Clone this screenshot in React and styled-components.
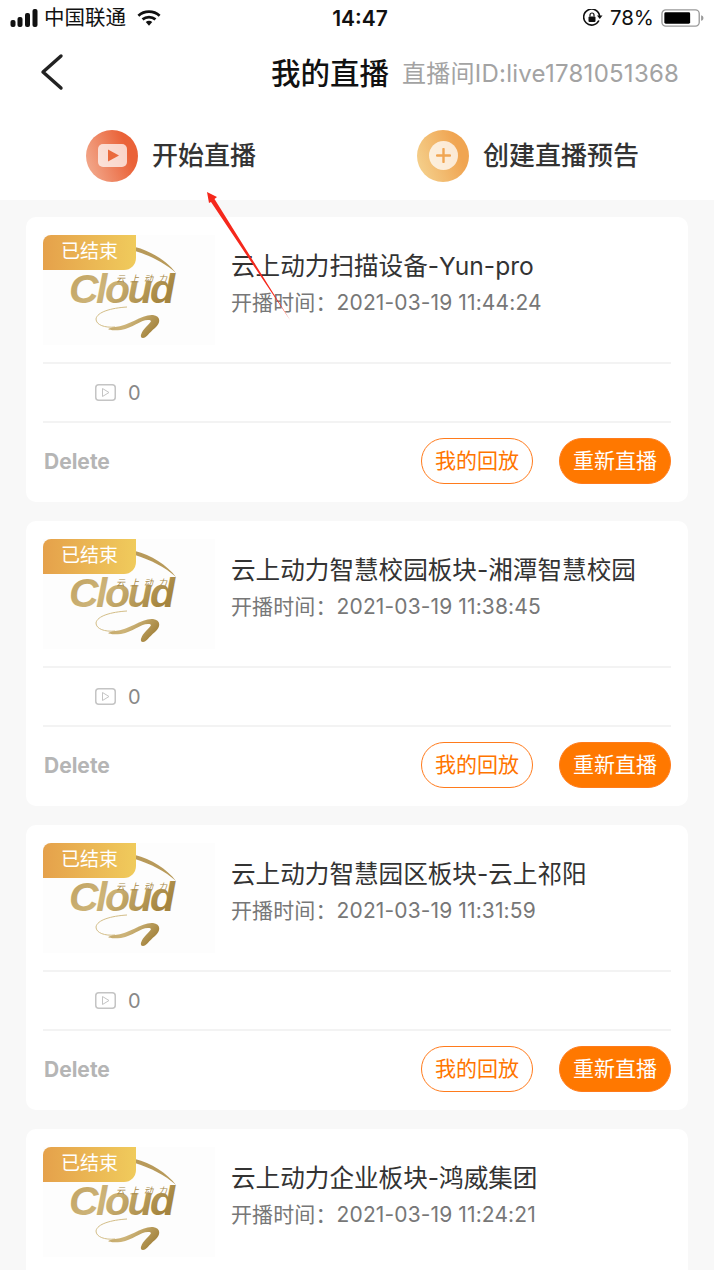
import React from 'react'
import styled, { createGlobalStyle } from 'styled-components'

const GlobalStyle = createGlobalStyle`
	html, body {
		margin: 0;
		padding: 0;
		background: #f8f8f8;
	}
	body {
		font-family: Inter, 'Noto Sans CJK SC', sans-serif;
		overflow: hidden;
	}
`
const Page = styled.div`
	position: relative;
	width: 714px;
	height: 1270px;
	overflow: hidden;
	background: #f8f8f8;
`
const Header = styled.header`
	background: #fff;
	height: 200px;
`
const StatusBar = styled.div`
	display: flex;
	align-items: center;
	justify-content: space-between;
	height: 36px;
	padding: 0 10px;
	color: #111;
`
const StatusSide = styled.div`
	display: flex;
	align-items: center;
	gap: ${(p) => p.$gap}px;
	width: ${(p) => p.$width}px;
	justify-content: ${(p) => (p.$right ? 'flex-end' : 'flex-start')};
`
const StatusText = styled.span`
	font-size: 20.5px;
	line-height: 24px;
`
const Clock = styled.span`
	font-size: 21px;
	font-weight: 600;
`
const WifiSlot = styled.span`
	display: flex;
	margin-left: 5px;
`
const NavBar = styled.div`
	display: flex;
	align-items: center;
	height: 72px;
	padding-left: 40px;
`
const NavTitle = styled.h1`
	margin: 2px 0 0 207px;
	font-size: 29.5px;
	line-height: 36px;
	font-weight: 500;
	color: #111;
	white-space: nowrap;
`
const NavId = styled.span`
	margin: 0 0 2px 13px;
	font-size: 24px;
	letter-spacing: 0.25px;
	color: #a3a3a3;
	white-space: nowrap;
`
const ActionRow = styled.div`
	display: flex;
	box-sizing: border-box;
	height: 92px;
	align-items: center;
	padding: 3px 0 0 86px;
`
const Action = styled.div`
	display: flex;
	align-items: center;
	gap: 14px;
	margin-right: ${(p) => p.$gap || 0}px;
`
const ActionLabel = styled.span`
	padding-bottom: 5px;
	font-size: 26px;
	color: #333;
	font-weight: 500;
`
const ActionCircle = styled.div`
	display: flex;
	align-items: center;
	justify-content: center;
	width: 52px;
	height: 52px;
	border-radius: 50%;
	background: ${(p) => p.$bg};
`
const PlusDisc = styled.div`
	display: flex;
	align-items: center;
	justify-content: center;
	width: 29px;
	height: 29px;
	border-radius: 50%;
	background: rgba(255, 255, 255, 0.75);
`
const List = styled.main`
	display: flex;
	flex-direction: column;
	gap: 19px;
	padding: 17px 26px 0;
`
const Card = styled.article`
	flex: none;
	height: 285px;
	box-sizing: border-box;
	padding: 18px 17px 0;
	background: #fff;
	border-radius: 10px;
`
const TopRow = styled.div`
	display: flex;
	height: 110px;
	border-bottom: 2px solid #f3f3f3;
	padding-bottom: 17px;
`
const Thumb = styled.div`
	position: relative;
	width: 172px;
	height: 110px;
	background: #fdfdfd;
	flex: none;
`
const Badge = styled.div`
	position: absolute;
	left: 0;
	top: 0;
	z-index: 1;
	width: 93px;
	height: 35px;
	box-sizing: border-box;
	padding-left: 18px;
	font-size: 19px;
	line-height: 34px;
	color: #fff;
	background: linear-gradient(90deg, #e5a14b, #f0cb5c);
	border-radius: 8px 0 12px 0;
`
const Info = styled.div`
	margin-left: 16px;
	padding-top: 15px;
`
const Title = styled.h2`
	margin: 0;
	font-size: 24.6px;
	line-height: 32px;
	font-weight: 400;
	color: #333;
	white-space: nowrap;
`
const SubTitle = styled.p`
	margin: 8px 0 0;
	font-size: 21px;
	line-height: 26px;
	letter-spacing: 0.12px;
	color: #777;
	white-space: nowrap;
`
const StatRow = styled.div`
	display: flex;
	align-items: center;
	gap: 12px;
	height: 57px;
	padding-left: 52px;
	border-bottom: 2px solid #f3f3f3;
	font-size: 20px;
	color: #888;
`
const FootRow = styled.div`
	display: flex;
	align-items: center;
	height: 76px;
`
const DeleteLink = styled.span`
	margin: 0 auto 0 1px;
	font-size: 21px;
	font-weight: 700;
	color: #b5b5b5;
`
const Pill = styled.button`
	width: 112px;
	height: 46px;
	padding: 0 0 5px;
	margin-left: ${(p) => (p.$filled ? 26 : 0)}px;
	border: 1px solid #ff7b1c;
	border-radius: 23px;
	font-family: inherit;
	font-size: 21px;
	color: ${(p) => (p.$filled ? '#fff' : '#ff7500')};
	background: ${(p) => (p.$filled ? '#ff7800' : '#fff')};
`
const Annotation = styled.svg`
	position: absolute;
	left: 200px;
	top: 185px;
	z-index: 2;
`

const Signal = () => (
	<svg width="28" height="18" viewBox="0 0 28 18">
		<rect x="0.5" y="11" width="5" height="7" rx="2" fill="#111" />
		<rect x="7.5" y="8" width="5" height="10" rx="2" fill="#111" />
		<rect x="15" y="4" width="5" height="14" rx="2" fill="#111" />
		<rect x="22.5" y="0" width="5" height="18" rx="2" fill="#111" />
	</svg>
)

const Wifi = () => (
	<svg width="24" height="18" viewBox="0 0 26 18" fill="none">
		<path d="M1.5 6.5C8 .7 18 .7 24.5 6.5" stroke="#111" strokeWidth="3" />
		<path d="M6 10.5c4-3.4 10-3.4 14 0" stroke="#111" strokeWidth="3" />
		<path d="M9.5 13.2c2.1-1.6 4.9-1.6 7 0L13 17.5z" fill="#111" />
	</svg>
)

const RotationLock = () => (
	<svg width="20" height="18" viewBox="0 0 20 18" fill="none">
		<path d="M15.9 11.5A8 8 0 1 1 16.6 7" stroke="#111" strokeWidth="1.6" />
		<path d="M14 6.5h5.5L16.8 10z" fill="#111" />
		<rect x="5.5" y="7.5" width="7" height="5.5" rx="1" fill="#111" />
		<path d="M7 7.5V6a2 2 0 0 1 4 0v1.5" stroke="#111" strokeWidth="1.2" />
	</svg>
)

const Battery = () => (
	<svg width="43" height="20" viewBox="0 0 45 20" fill="none">
		<rect x="1" y="1.5" width="39" height="17" rx="4" stroke="#999" strokeWidth="1.4" />
		<rect x="3.5" y="4" width="27" height="12" rx="1.5" fill="#000" />
		<path d="M42 7c1.6.4 2.4 1.6 2.4 3s-.8 2.6-2.4 3z" fill="#999" />
	</svg>
)

const BackIcon = () => (
	<svg width="24" height="38" viewBox="0 0 24 38" fill="none">
		<path d="M21 3 3 19l18 16" stroke="#222" strokeWidth="3.4" strokeLinecap="round" strokeLinejoin="round" />
	</svg>
)

const PlayGlyph = () => (
	<svg width="29" height="23" viewBox="0 0 29 23">
		<rect width="29" height="23" rx="5" fill="#fff" fillOpacity="0.72" />
		<path d="M10 5.5 21 11.5 10 17.5z" fill="#ea6a3c" />
	</svg>
)

const PlusGlyph = () => (
	<svg width="15" height="15" viewBox="0 0 15 15">
		<path d="M7.5 1v13M1 7.5h13" stroke="#f0a552" strokeWidth="2.4" strokeLinecap="round" />
	</svg>
)

const ViewsIcon = () => (
	<svg width="21" height="17" viewBox="0 0 21 17" fill="none">
		<rect x="0.75" y="0.75" width="19.5" height="15.5" rx="3" stroke="#c4c4c4" strokeWidth="1.5" />
		<path d="M7.5 4.5 14 8.5l-6.5 4z" stroke="#c4c4c4" />
	</svg>
)

const CloudLogo = ({ id }) => (
	<svg width="172" height="110" viewBox="0 0 172 110" fill="none">
		<defs>
			<linearGradient id={id} x1="0" y1="0" x2="1" y2="0.4">
				<stop offset="0" stopColor="#bfa05e" />
				<stop offset="0.45" stopColor="#cdb479" />
				<stop offset="1" stopColor="#a5853f" />
			</linearGradient>
		</defs>
		<path d="M92 12C108 16 124 26 133 38 122 28 108 21 92 16z" fill="#b89a5a" />
		<path d="M84 72C68 73 54 77 53 84 53 90 62 93 72 92" stroke="#d3bd87" strokeWidth="1" />
		<path
			d="M72 92C86 91 99 79 110 80 118 81 118 88 112 93 106 98 103 103 100 103 96 103 98 97 103 92 108 87 110 85 105 85 97 85 90 93 78 95 66 96 60 94 72 92z"
			fill={`url(#${id})`}
		/>
		<text x="26" y="68" fontFamily="'Liberation Sans', sans-serif" fontStyle="italic" fontWeight="700" fontSize="41" letterSpacing="-2.5" fill={`url(#${id})`}>
			Cloud
		</text>
		<text x="73" y="47" fontFamily="'Noto Sans CJK SC', sans-serif" fontStyle="italic" fontSize="9" letterSpacing="5" fill="#a88a4a">
			云上动力
		</text>
	</svg>
)

const items = [
	{ title: '云上动力扫描设备-Yun-pro', time: '2021-03-19 11:44:24' },
	{ title: '云上动力智慧校园板块-湘潭智慧校园', time: '2021-03-19 11:38:45' },
	{ title: '云上动力智慧园区板块-云上祁阳', time: '2021-03-19 11:31:59' },
	{ title: '云上动力企业板块-鸿威集团', time: '2021-03-19 11:24:21' },
]

const App = () => {
	return (
		<Page>
			<GlobalStyle />
			<Header>
				<StatusBar>
					<StatusSide $gap={6} $width={246}>
						<Signal />
						<StatusText>中国联通</StatusText>
						<WifiSlot>
							<Wifi />
						</WifiSlot>
					</StatusSide>
					<Clock>14:47</Clock>
					<StatusSide $right $gap={7} $width={240}>
						<RotationLock />
						<StatusText>78%</StatusText>
						<Battery />
					</StatusSide>
				</StatusBar>
				<NavBar>
					<BackIcon />
					<NavTitle>我的直播</NavTitle>
					<NavId>直播间ID:live1781051368</NavId>
				</NavBar>
				<ActionRow>
					<Action $gap={161}>
						<ActionCircle $bg="linear-gradient(70deg, #f3b196, #ea6238 75%)">
							<PlayGlyph />
						</ActionCircle>
						<ActionLabel>开始直播</ActionLabel>
					</Action>
					<Action>
						<ActionCircle $bg="linear-gradient(70deg, #f5d593, #f0a552 75%)">
							<PlusDisc>
								<PlusGlyph />
							</PlusDisc>
						</ActionCircle>
						<ActionLabel>创建直播预告</ActionLabel>
					</Action>
				</ActionRow>
			</Header>
			<List>
				{items.map((item, i) => (
					<Card key={item.time}>
						<TopRow>
							<Thumb>
								<Badge>已结束</Badge>
								<CloudLogo id={`gold-${i}`} />
							</Thumb>
							<Info>
								<Title>{item.title}</Title>
								<SubTitle>开播时间：{item.time}</SubTitle>
							</Info>
						</TopRow>
						<StatRow>
							<ViewsIcon />0
						</StatRow>
						<FootRow>
							<DeleteLink>Delete</DeleteLink>
							<Pill>我的回放</Pill>
							<Pill $filled>重新直播</Pill>
						</FootRow>
					</Card>
				))}
			</List>
			<Annotation width="100" height="145" viewBox="0 0 100 145">
				<path d="M7 7 17 12 14.5 14 90 135 11 17 9 18z" fill="#f5281c" />
			</Annotation>
		</Page>
	)
}

export default App
